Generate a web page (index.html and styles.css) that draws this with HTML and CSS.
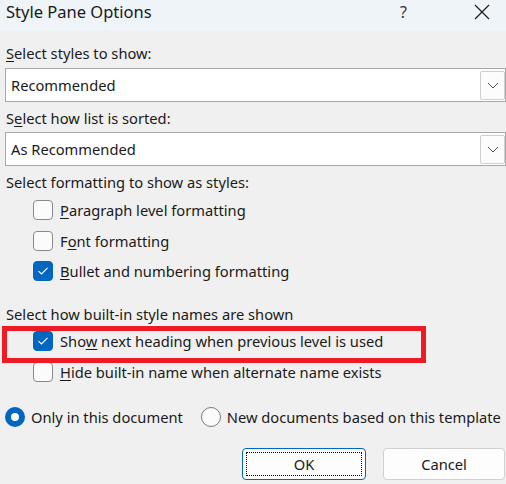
FILE: index.html
```html
<!DOCTYPE html>
<html>
<head>
<meta charset="utf-8">
<link rel="stylesheet" href="styles.css">
</head>
<body>
<div class="dialog">
  <div class="titlebar">
    <span class="title">Style Pane Options</span>
    <span class="help">?</span>
    <span class="close">
      <svg width="16" height="16" viewBox="0 0 16 16"><path d="M1 1 L15 15 M15 1 L1 15" stroke="#1a1a1a" stroke-width="1.2" fill="none"/></svg>
    </span>
  </div>
  <div class="content">
    <div class="label l1"><u>S</u>elect styles to show:</div>
    <div class="select">
      <span class="value">Recommended</span>
      <span class="arrow"><svg width="12" height="7" viewBox="0 0 12 7"><path d="M1 1 L6 6 L11 1" stroke="#555" stroke-width="1" fill="none"/></svg></span>
    </div>
    <div class="label l2">S<u>e</u>lect how list is sorted:</div>
    <div class="select">
      <span class="value">As Recommended</span>
      <span class="arrow"><svg width="12" height="7" viewBox="0 0 12 7"><path d="M1 1 L6 6 L11 1" stroke="#555" stroke-width="1" fill="none"/></svg></span>
    </div>
    <div class="label l3">Select formatting to show as styles:</div>
    <div class="group g1">
      <div class="row"><span class="cb"></span><span><u>P</u>aragraph level formatting</span></div>
      <div class="row"><span class="cb"></span><span>F<u>o</u>nt formatting</span></div>
      <div class="row"><span class="cb checked"><svg width="12" height="10" viewBox="0 0 12 10"><path d="M1.5 5.2 L4.5 8 L10.5 1.8" stroke="#fff" stroke-width="1.1" fill="none"/></svg></span><span><u>B</u>ullet and numbering formatting</span></div>
    </div>
    <div class="label l4">Select how built-in style names are shown</div>
    <div class="group g2">
      <div class="row highlight"><span class="cb checked"><svg width="12" height="10" viewBox="0 0 12 10"><path d="M1.5 5.2 L4.5 8 L10.5 1.8" stroke="#fff" stroke-width="1.1" fill="none"/></svg></span><span>Sho<u>w</u> next heading when previous level is used</span></div>
      <div class="row"><span class="cb"></span><span><u>H</u>ide built-in name when alternate name exists</span></div>
    </div>
    <div class="radios">
      <div class="radio-item"><span class="rb on"></span><span>Only in this document</span></div>
      <div class="radio-item"><span class="rb"></span><span>New documents based on this template</span></div>
    </div>
    <div class="buttons">
      <div class="btn ok"><span class="focus">OK</span></div>
      <div class="btn cancel">Cancel</div>
    </div>
  </div>
</div>
</body>
</html>
```
FILE: styles.css
```css
html, body {
  margin: 0;
  padding: 0;
  background: #f0f0f0;
  overflow: hidden;
}
body {
  width: 506px;
  height: 484px;
  font-family: "Noto Sans", "Open Sans", sans-serif;
  font-size: 14.7px;
  color: #1a1a1a;
}
.dialog {
  width: 506px;
  height: 484px;
  overflow: hidden;
}
.titlebar {
  height: 31px;
  background: #eff4f9;
  display: flex;
  align-items: center;
}
.title {
  font-size: 16.5px;
  padding-left: 6px;
  flex: 1;
  margin-top: -8px;
}
.help {
  font-size: 16px;
  color: #333;
  width: 20px;
  margin-right: 54px;
  margin-top: -8px;
}
.close {
  width: 16px;
  height: 16px;
  margin-right: 16px;
  margin-top: -8px;
  display: flex;
}
.content {
  padding-left: 5px;
}
.label {
  height: 20px;
  line-height: 20px;
  padding-left: 1px;
}
.label u, .row u {
  text-decoration-thickness: 1px;
  text-underline-offset: 2px;
}
.l1 { margin-top: 12px; margin-bottom: 5px; }
.l2 { margin-top: 6px; margin-bottom: 4px; }
.l3 { margin-top: 6px; }
.select {
  height: 32px;
  width: 499px;
  border: 1px solid #a8a8a8;
  background: #fff;
  display: flex;
  align-items: center;
  justify-content: space-between;
}
.value {
  padding-left: 5px;
}
.arrow {
  width: 23px;
  height: 27px;
  border: 1px solid #cfcfcf;
  border-radius: 2px;
  background: #fcfcfc;
  display: flex;
  align-items: center;
  justify-content: center;
}
.group {
  display: flex;
  flex-direction: column;
}
.g1 { margin-top: 3px; }
.row {
  height: 30.5px;
  display: flex;
  align-items: center;
  padding-left: 28px;
  box-sizing: border-box;
}
.cb {
  width: 18px;
  height: 18px;
  border: 1px solid #8a8a8a;
  border-radius: 4px;
  background: #fbfbfb;
  margin-right: 7px;
  display: flex;
  align-items: center;
  justify-content: center;
  flex-shrink: 0;
}
.cb.checked {
  background: #0067c0;
  border-color: #0067c0;
}
.l4 { margin-top: 17.5px; }
.g2 { margin-top: 2px; }
.highlight {
  position: relative;
}
.highlight::after {
  content: "";
  position: absolute;
  left: -3px;
  top: 0;
  width: 414px;
  height: 27px;
  border: 5px solid #ed1c24;
}
.radios {
  display: flex;
  align-items: center;
  margin-top: 20px;
  height: 20px;
}
.radio-item {
  display: flex;
  align-items: center;
}
.radio-item + .radio-item {
  margin-left: 18px;
}
.rb {
  width: 18px;
  height: 18px;
  border: 1px solid #7a7a7a;
  border-radius: 50%;
  background: #fbfbfb;
  margin-right: 6px;
  box-sizing: content-box;
}
.rb.on {
  width: 8px;
  height: 8px;
  border: 6px solid #0067c0;
  background: #fff;
}
.buttons {
  display: flex;
  justify-content: flex-end;
  margin-top: 21px;
  margin-right: 1px;
}
.btn {
  width: 122px;
  height: 32px;
  border: 1px solid #d0d0d0;
  border-radius: 4px;
  background: #fdfdfd;
  display: flex;
  align-items: center;
  justify-content: center;
  box-sizing: border-box;
  line-height: 20px;
}
.btn.ok {
  width: 124px;
  border-color: #0067c0;
  margin-right: 17px;
  padding: 3px;
}
.focus {
  flex: 1;
  align-self: stretch;
  border: 1px dotted #000;
  display: flex;
  align-items: center;
  justify-content: center;
}
```
